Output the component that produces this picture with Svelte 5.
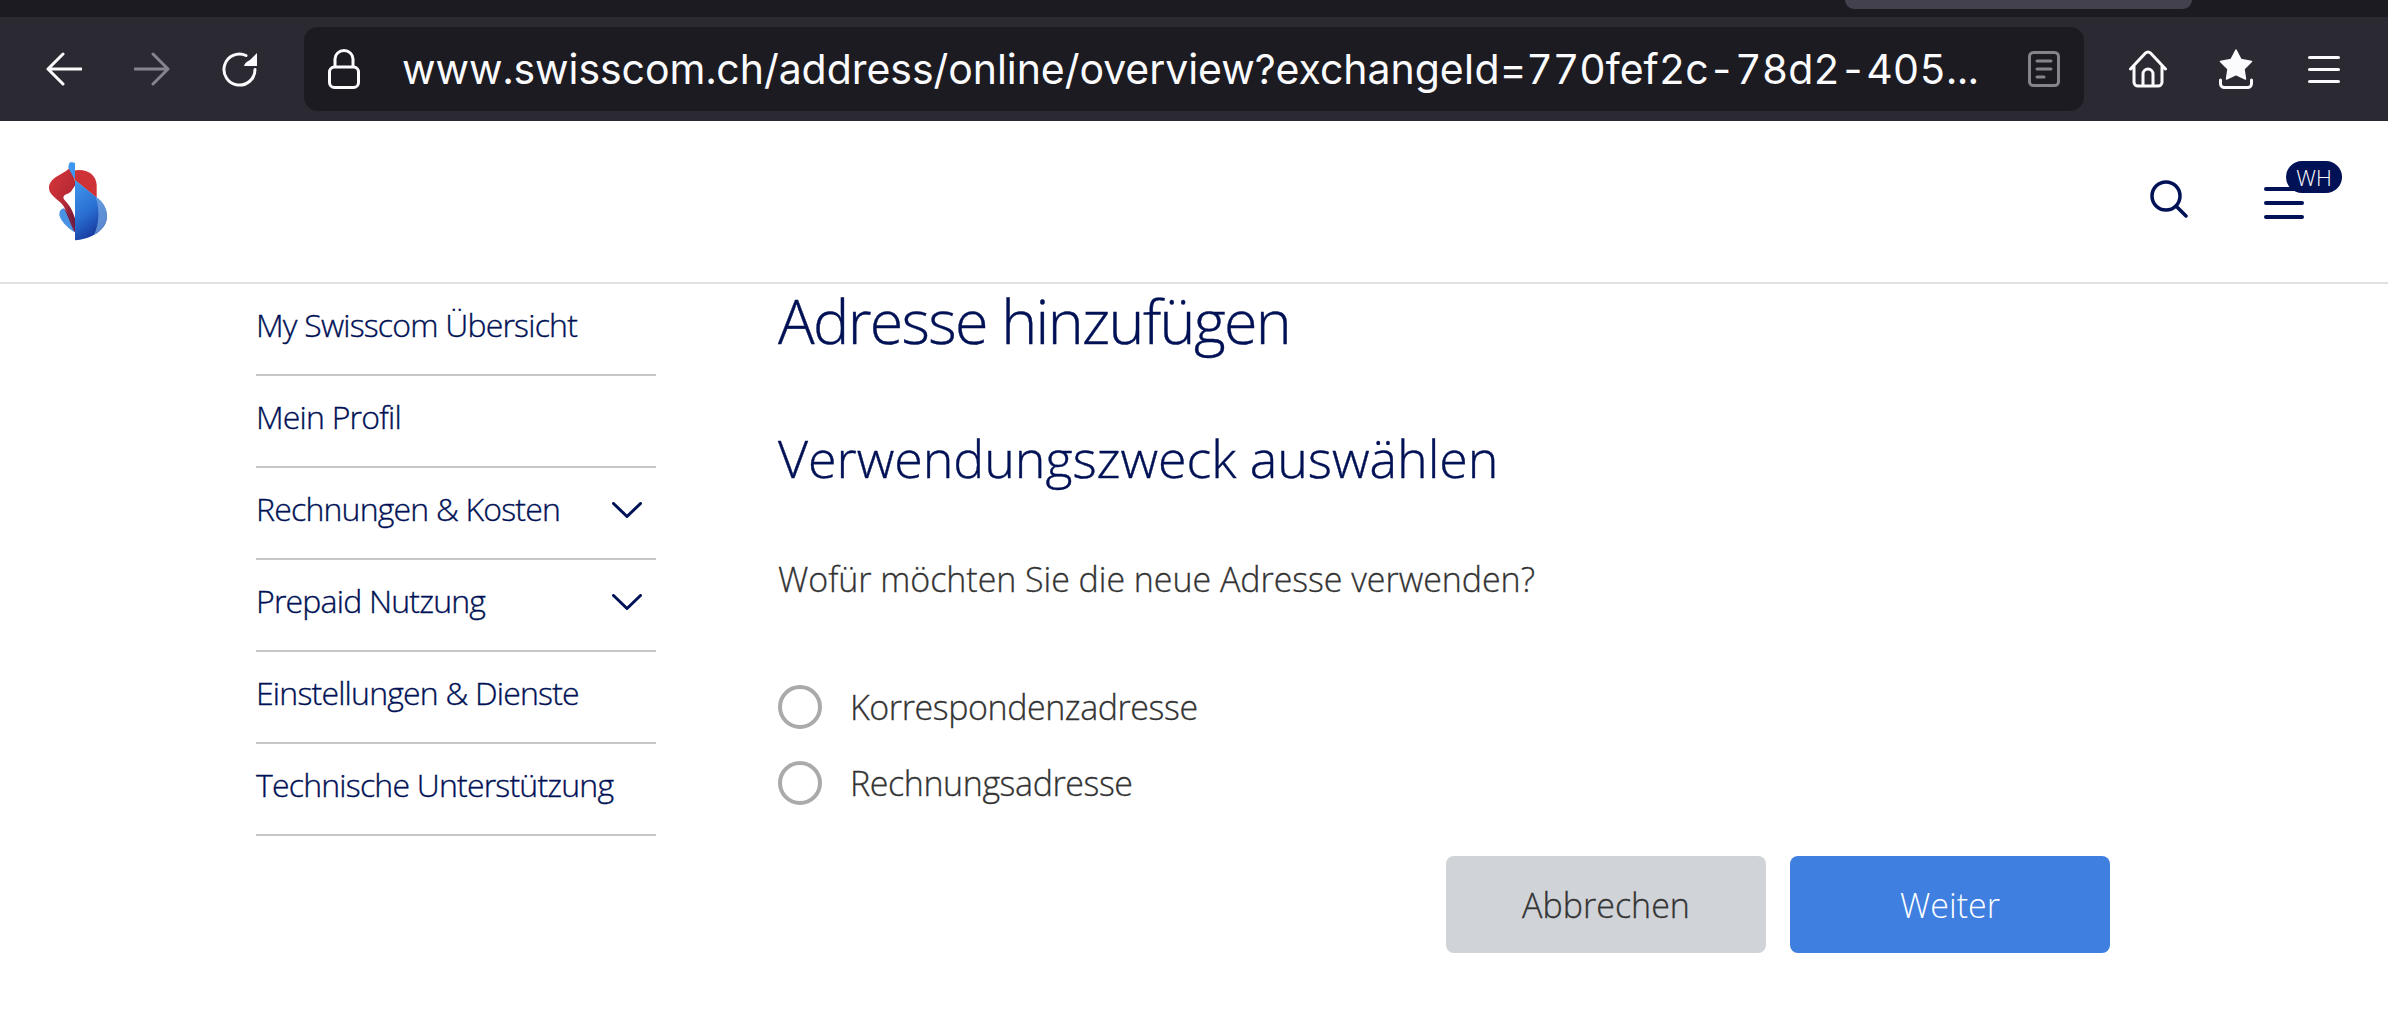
<script>
  const navItems = [
    { label: 'My Swisscom Übersicht' },
    { label: 'Mein Profil' },
    { label: 'Rechnungen & Kosten', expandable: true },
    { label: 'Prepaid Nutzung', expandable: true },
    { label: 'Einstellungen & Dienste' },
    { label: 'Technische Unterstützung' }
  ];
  const options = ['Korrespondenzadresse', 'Rechnungsadresse'];
</script>

<div class="page">
  <div class="tabstrip"><div class="tabpill"></div></div>

  <div class="toolbar">
    <svg class="ico nav" viewBox="0 0 36 36" fill="none" stroke="#fbfbfe" stroke-width="3" stroke-linecap="round" stroke-linejoin="round"><path d="M35 18H2M17 3 2 18l15 15"/></svg>
    <svg class="ico nav dim" viewBox="0 0 36 36" fill="none" stroke="#85848c" stroke-width="3" stroke-linecap="round" stroke-linejoin="round"><path d="M1 18h33M19 3l15 15-15 15"/></svg>
    <svg class="ico nav" viewBox="0 0 36 36" fill="none"><path d="M33 18.500A15.500 15.500 0 1 1 24 4.500" stroke="#fbfbfe" stroke-width="3" stroke-linecap="round"/><path d="M35 2v13H22c1-4 5-5 7-7z" fill="#fbfbfe"/></svg>

    <div class="urlbar">
      <svg class="lock" viewBox="0 0 32 40" fill="none" stroke="#fbfbfe" stroke-width="3" stroke-linejoin="round"><rect x="1.500" y="18" width="29" height="20.500" rx="5"/><path d="M7 18V10a9 8.500 0 0 1 18 0v8"/></svg>
      <span class="url">www.swisscom.ch/address/online/overview?exchangeId=770fef2c-78d2-405...</span>
      <svg class="reader" viewBox="0 0 32 36" fill="none" stroke="#85848c" stroke-width="3" stroke-linecap="round"><rect x="1.500" y="1.500" width="29" height="33" rx="4"/><path d="M9 10h14M9 18h14M9 26h7"/></svg>
    </div>

    <svg class="home" viewBox="0 0 38 38" fill="none" stroke="#fbfbfe" stroke-width="3" stroke-linecap="round" stroke-linejoin="round"><path d="M1.500 19 16.500 3a3.500 3.500 0 0 1 5 0l15 16M5 16v16a4 4 0 0 0 4 4h20a4 4 0 0 0 4-4V16M14 36V24a5 5 0 0 1 10 0v12"/></svg>
    <svg class="bookmarks" viewBox="0 0 34 40" fill="none"><path d="M17 1l5 9.500 10.500 2-7.500 7.500 1.500 10L17 25.500 7.500 30 9 20 1.500 12.500l10.500-2z" fill="#fbfbfe" stroke="#fbfbfe" stroke-width="1.500" stroke-linejoin="round"/><path d="M1.500 31v3.500a4 4 0 0 0 4 4h23a4 4 0 0 0 4-4V31" stroke="#fbfbfe" stroke-width="3" stroke-linecap="round"/></svg>
    <div class="appmenu"><i></i><i></i><i></i></div>
  </div>

  <header class="siteheader">
    <svg class="logo" viewBox="0 0 240 270">
      <defs>
        <linearGradient id="blueMain" x1="0.100" y1="0" x2="0.500" y2="1">
          <stop offset="0" stop-color="#3f97ec"/><stop offset="0.550" stop-color="#2a6fd2"/><stop offset="1" stop-color="#15349a"/>
        </linearGradient>
        <linearGradient id="redMain" x1="0" y1="0" x2="0.800" y2="1">
          <stop offset="0" stop-color="#d8383a"/><stop offset="0.600" stop-color="#b92a35"/><stop offset="1" stop-color="#6d1a3c"/>
        </linearGradient>
      </defs>
      <path d="M88 40C70 58 26 68 27 100c1 20 24 32 36 44 16 16 26 50 42 84V78c-5-18-10-30-17-38z" fill="url(#redMain)"/>
      <path d="M105 92c-6 6-10 20-22 24-12 3-16 10-10 18 10 12 22 22 32 56z" fill="#fff"/>
      <path d="M98 48c34-10 70 6 72 42v38L105 76z" fill="#cf3236"/>
      <path d="M105 24c-4-3-12-3-15-2-6 8-6 16-2 22l17 30z" fill="#3e97ee"/>
      <path d="M105 232c-15-7-47-35-47-55 0-10 6-15 13-17 12 12 24 38 34 62z" fill="#4a92e4"/>
      <path d="M71 158c14 14 24 40 34 62v12c-10-16-22-52-34-74z" fill="#7a1d3e"/>
      <path d="M105 75l62 50c24 16 35 38 34 62-2 38-46 66-96 69z" fill="url(#blueMain)"/>
      <path d="M167 125c24 16 35 38 34 62-2 22-18 42-40 54 18-34 18-80 6-116z" fill="#79a9e2" opacity="0.700"/>
    </svg>
    <div class="sitetools">
      <svg class="search" viewBox="0 0 38 38" fill="none" stroke="#001155" stroke-width="3.500" stroke-linecap="round"><circle cx="16" cy="16" r="14"/><path d="M26 26l10 10"/></svg>
      <div class="burger">
        <i></i><i></i><i></i>
        <span class="badge">WH</span>
      </div>
    </div>
  </header>

  <main class="main">
    <nav class="sidebar">
      {#each navItems as item}
        <a class="navrow" href="#top">
          <span>{item.label}</span>
          {#if item.expandable}
            <svg class="chev" viewBox="0 0 30 16" fill="none" stroke="#001155" stroke-width="3" stroke-linecap="round" stroke-linejoin="round"><path d="M1.500 1.500 15 14.500 28.500 1.500"/></svg>
          {/if}
        </a>
      {/each}
    </nav>

    <section class="content">
      <h1>Adresse hinzufügen</h1>
      <h2>Verwendungszweck auswählen</h2>
      <p class="question">Wofür möchten Sie die neue Adresse verwenden?</p>
      <div class="options">
        {#each options as o}
          <label class="option"><span class="radio"></span><span>{o}</span></label>
        {/each}
      </div>
      <div class="actions">
        <button class="btn secondary">Abbrechen</button>
        <button class="btn primary">Weiter</button>
      </div>
    </section>
  </main>
</div>

<style>
  :global(body) { margin: 0; background: #fff; }
  .page { width: 2388px; height: 1032px; overflow: hidden; background: #fff; font-family: "Open Sans", sans-serif; font-weight: 300; }
  .tabstrip { height: 17px; background: #1c1b22; box-sizing: border-box; padding-left: 1845px; }
  .tabpill { width: 347px; height: 9px; background: #42414d; border-radius: 0 0 14px 14px; }
  .toolbar { height: 104px; background: #2b2a33; display: flex; align-items: center; padding-left: 46px; box-sizing: border-box; }
  .ico { width: 36px; height: 36px; flex: none; margin-right: 52px; }
  .ico.nav:nth-of-type(3) { margin-right: 0; }
  .urlbar { margin-left: 46px; width: 1780px; height: 84px; background: #1c1b22; border-radius: 14px; display: flex; align-items: center; justify-content: space-between; box-sizing: border-box; padding: 0 24px; flex: none; }
  .lock { width: 32px; height: 40px; flex: none; }
  .url { margin-left: 42px; flex: 1; font-family: Inter, sans-serif; font-weight: 400; font-size: 41px; font-variant-numeric: tabular-nums; letter-spacing: -0.050px; color: #fbfbfe; white-space: nowrap; }
  .reader { width: 32px; height: 36px; flex: none; }
  .home { width: 38px; height: 38px; flex: none; margin-left: 45px; }
  .bookmarks { width: 34px; height: 40px; flex: none; margin-left: 52px; }
  .appmenu { margin-left: 55px; width: 32px; display: flex; flex-direction: column; gap: 9px; }
  .appmenu i { display: block; height: 3px; background: #fbfbfe; border-radius: 2px; }

  .siteheader { height: 163px; box-sizing: border-box; border-bottom: 2px solid #dfe1e2; display: flex; justify-content: space-between; align-items: flex-start; }
  .logo { width: 80px; height: 90px; margin: 34px 0 0 40px; flex: none; }
  .sitetools { display: flex; align-items: flex-start; margin-right: 46px; }
  .search { width: 38px; height: 38px; margin-top: 59px; flex: none; }
  .burger { position: relative; width: 40px; margin: 66px 38px 0 76px; display: flex; flex-direction: column; gap: 10px; }
  .burger i { display: block; height: 4px; background: #001155; border-radius: 2px; }
  .badge { position: absolute; left: 22px; top: -26px; width: 56px; height: 32px; border-radius: 16px; background: #001155; color: #fff; font-size: 22px; line-height: 32px; text-align: center; font-weight: 300; }

  .main { display: flex; padding-left: 256px; }
  .sidebar { width: 400px; flex: none; }
  .navrow { height: 92px; box-sizing: border-box; border-bottom: 2px solid #c8c8c8; display: flex; align-items: center; justify-content: space-between; color: #001155; font-size: 32px; -webkit-text-stroke: 0.350px #001155; letter-spacing: -0.800px; text-decoration: none; padding: 0 14px 9px 0; }
  .chev { width: 30px; height: 16px; flex: none; margin-top: 3px; }

  .content { margin-left: 122px; width: 1332px; }
  h1 { margin: -3px 0 0; font-size: 61px; line-height: 80px; font-weight: 300; color: #001155; -webkit-text-stroke: 0.400px #001155; letter-spacing: -1.650px; }
  h2 { margin: 57px 0 0; font-size: 52px; line-height: 80px; font-weight: 300; color: #001155; -webkit-text-stroke: 0.400px #001155; letter-spacing: -0.060px; }
  .question { margin: 56px 0 0; font-size: 34px; line-height: 50px; color: #333; -webkit-text-stroke: 0.300px #333; letter-spacing: -0.050px; }
  .options { margin-top: 81px; display: flex; flex-direction: column; gap: 32px; }
  .option { display: flex; align-items: center; gap: 28px; height: 44px; font-size: 34px; color: #333; -webkit-text-stroke: 0.300px #333; letter-spacing: -0.420px; }
  .radio { width: 44px; height: 44px; box-sizing: border-box; border: 4px solid #aaa; border-radius: 50%; flex: none; background: #fff; }
  .actions { margin-top: 51px; display: flex; justify-content: flex-end; gap: 24px; }
  .btn { width: 320px; height: 97px; border: 0; border-radius: 8px; font-family: inherit; font-weight: 300; font-size: 34px; padding: 0; }
  .secondary { background: #d0d3d7; color: #333; -webkit-text-stroke: 0.300px #333; }
  .primary { background: #3e7fe0; color: #fff; }
</style>
